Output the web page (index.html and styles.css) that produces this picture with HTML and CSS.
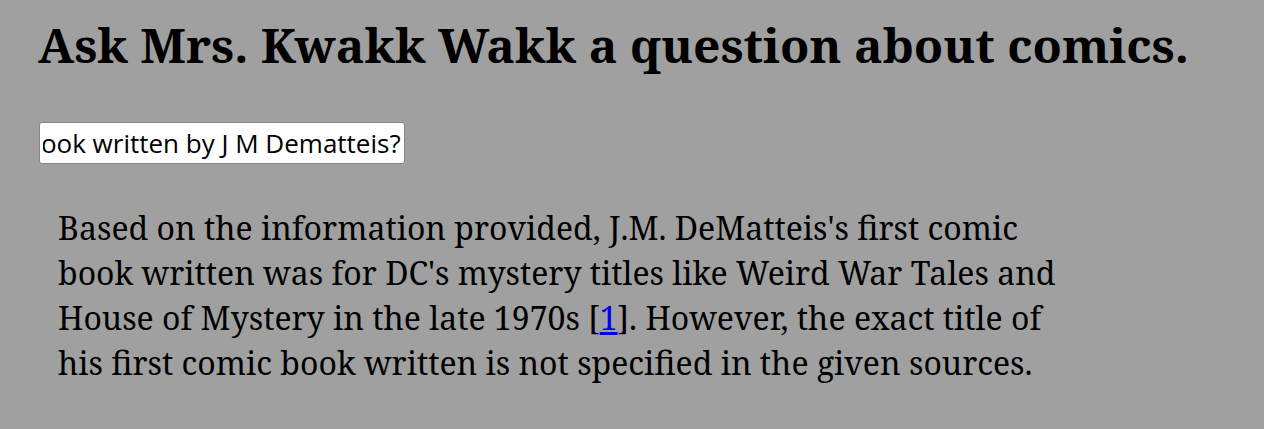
FILE: index.html
```html
<!DOCTYPE html>
<html lang="en">
<head>
    <meta charset="UTF-8">
    <title>Mrs. Kwakk Wakk</title>
    <link rel="stylesheet" href="styles.css">
</head>
<body>
	<div class="page">
		<h1 class="title">Ask Mrs. Kwakk Wakk a question about comics.</h1>
		<div class="ask">
			<input id="question" class="ask_input" type="text" value="What was the first comic book written by J M Dematteis?">
		</div>
		<div class="answer">
			<p>Based on the information provided, J.M. DeMatteis's first comic book written was for DC's mystery titles like Weird War Tales and House of Mystery in the late 1970s [<a href="#">1</a>]. However, the exact title of his first comic book written is not specified in the given sources.</p>
		</div>
	</div>
	<script src="script.js"></script>
</body>
</html>
```
FILE: styles.css
```css
body{
	margin: 0;
	padding: 0;
	background: #a0a0a0;
	font-family: "Noto Serif", "DejaVu Serif", serif;
	color: #000;
}
.page{
	padding: 0 38px;
}
.title{
	margin: 0;
	padding-top: 16px;
	font-size: 48px;
	line-height: 58px;
	font-weight: bold;
}
.ask{
	margin-top: 48px;
}
.ask_input{
	box-sizing: border-box;
	width: 366px;
	height: 42px;
	padding: 0 3px;
	font-family: "Open Sans", "Noto Sans", sans-serif;
	font-size: 26px;
	color: #000;
	background: #fff;
	border: 1px solid #858585;
	border-radius: 3px;
	margin-left: 1px;
}
.answer{
	padding: 41px 20px 0 20px;
	max-width: 1000px;
}
.answer p{
	margin: 0;
	font-size: 32px;
	line-height: 45px;
}
.answer a{
	color: #0000ee;
}
```
FILE: script.js
```js
const q = document.getElementById('question');
q.scrollLeft = q.scrollWidth;
```
